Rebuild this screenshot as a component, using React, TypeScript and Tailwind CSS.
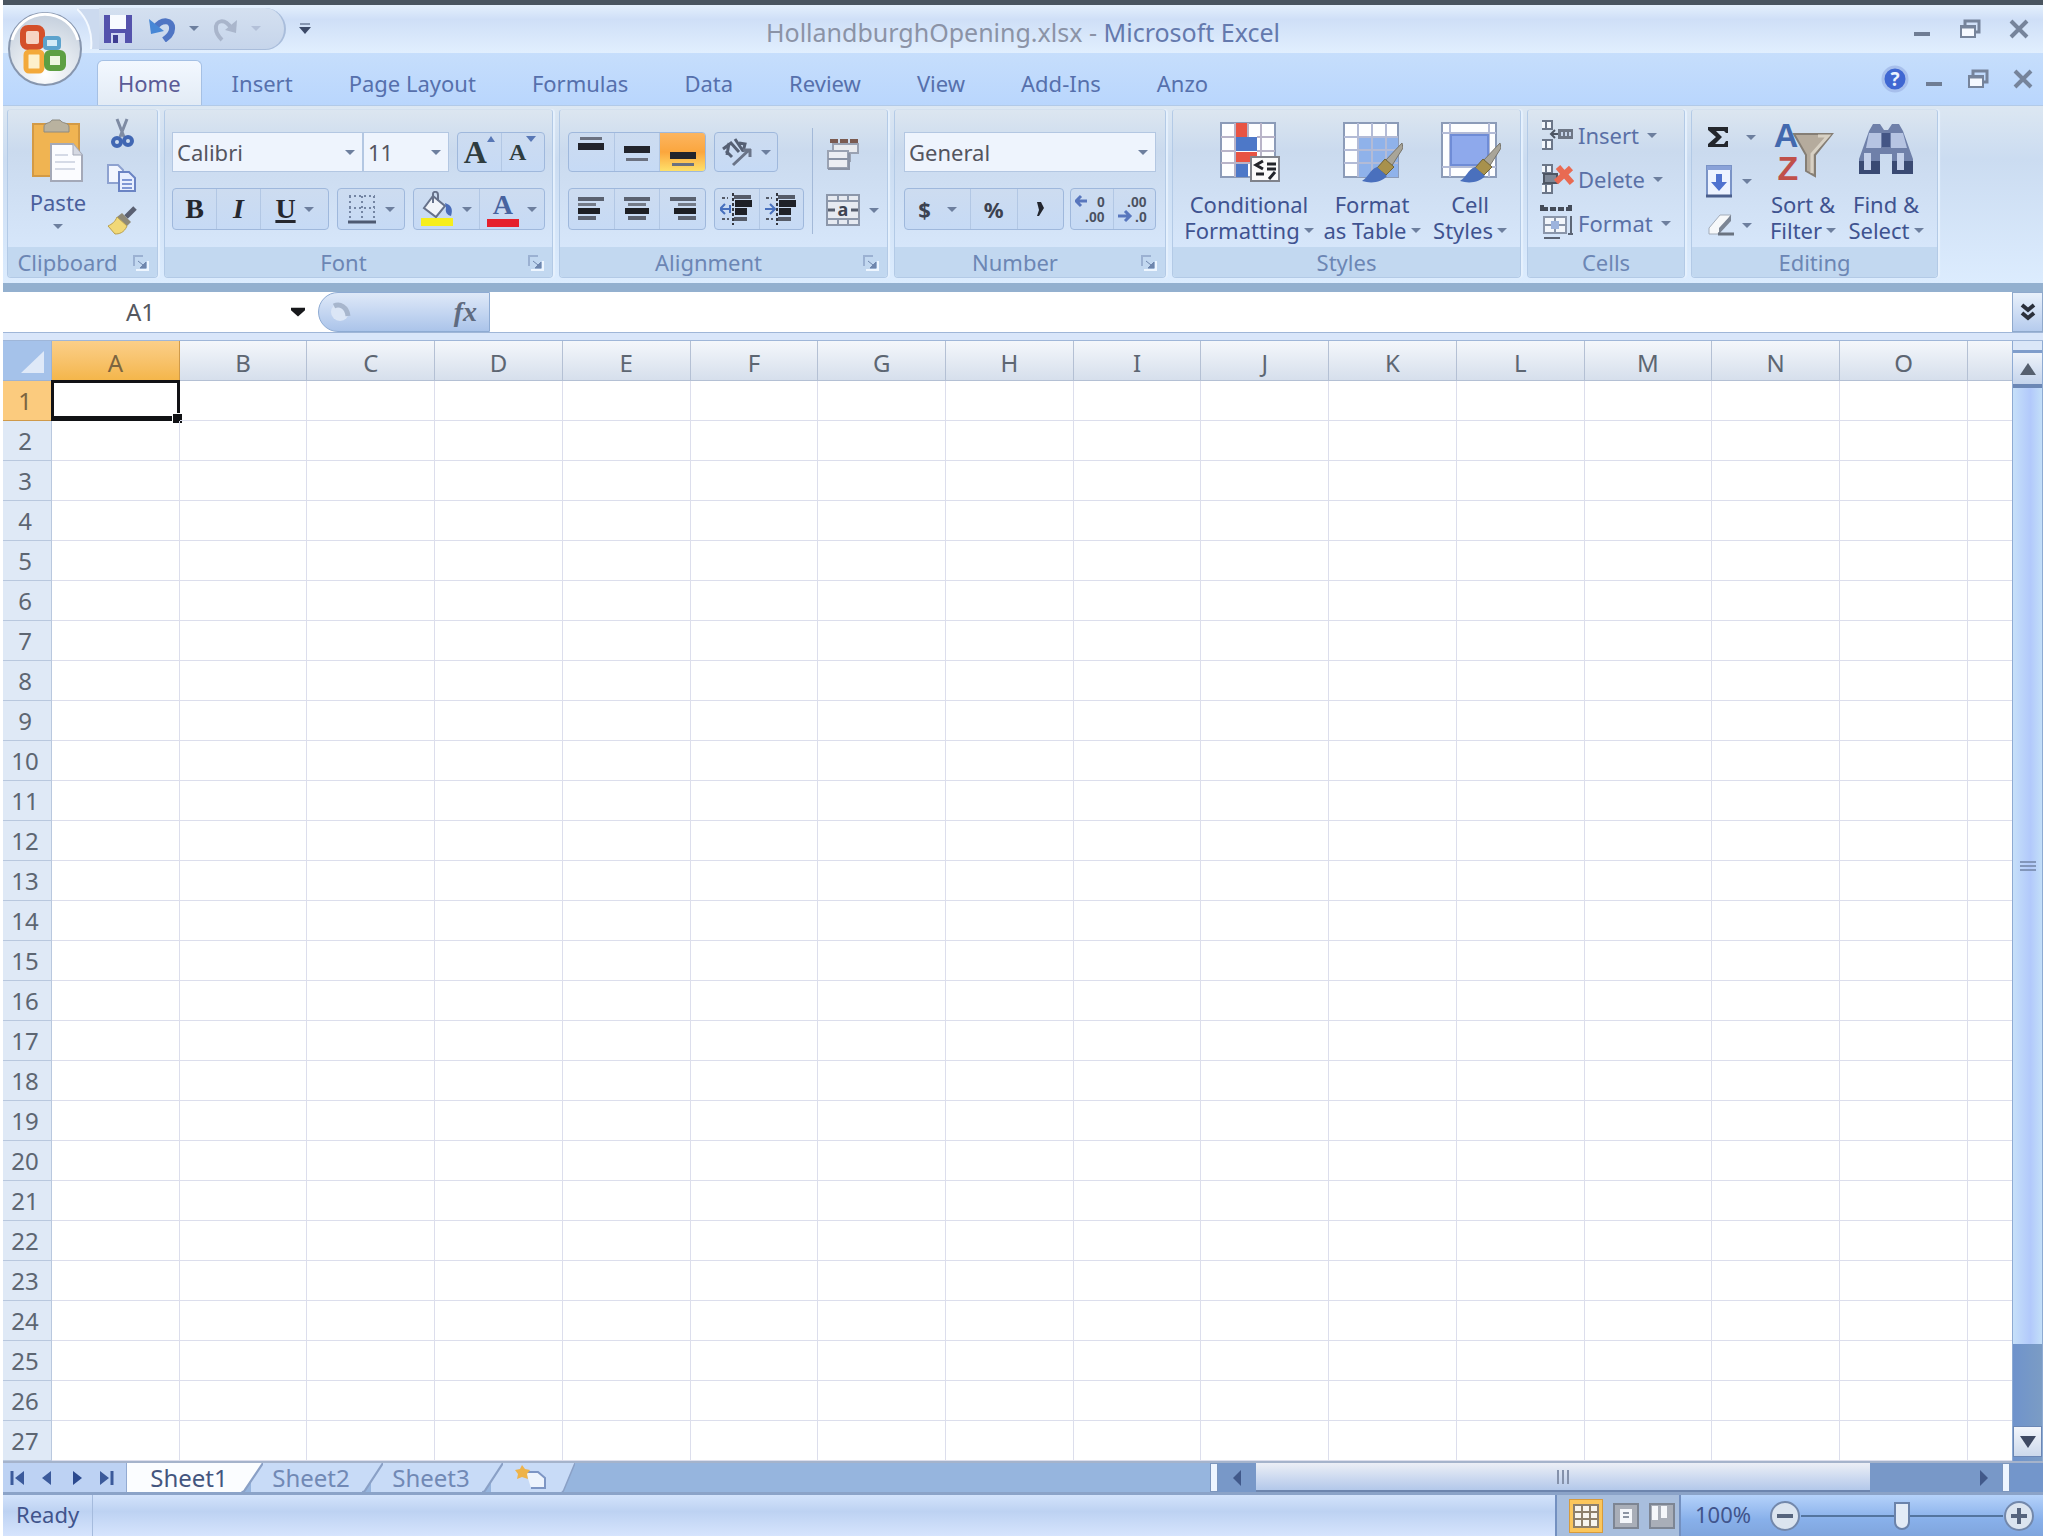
import React from 'react';

const columns = ['A', 'B', 'C', 'D', 'E', 'F', 'G', 'H', 'I', 'J', 'K', 'L', 'M', 'N', 'O'];
const rows = Array.from({ length: 27 }, (_, i) => i + 1);
const tabs = ['Insert', 'Page Layout', 'Formulas', 'Data', 'Review', 'View', 'Add-Ins', 'Anzo'];

interface ArrowProps {
    className?: string;
}

const Arrow: React.FC<ArrowProps> = ({ className = 'text-[#6d7f9e]' }) => (
    <svg viewBox="0 0 12 6" className={`w-[10px] h-[5px] shrink-0 ${className}`} aria-hidden="true">
        <path d="M0 0h12L6 6z" fill="currentColor" />
    </svg>
);

interface GroupProps {
    title: string;
    className: string;
    launcher?: boolean;
    children: React.ReactNode;
}

const Group: React.FC<GroupProps> = ({ title, className, launcher, children }) => (
    <section className={`flex flex-col shrink-0 rounded border border-[#b3cae6] border-t-[#d3e0ee] shadow-[2px_0_1px_#e6f1fd] overflow-hidden ${className}`}>
        <div className="h-[137px] bg-linear-to-b from-[#dce6f0] via-[#cadaee] via-30% to-[#d6e6fa]">{children}</div>
        <div className="h-[30px] flex items-center bg-[#c2d8f0] text-[#6c86b4] px-1">
            <h2 className={`flex-1 text-center leading-7 ${launcher ? 'pr-2' : ''}`}>{title}</h2>
            {launcher && (
                <button type="button" aria-label={`${title} options`} className="mr-1">
                    <svg viewBox="0 0 18 18" className="w-[18px] h-[18px]">
                        <path d="M3 13V3h9" fill="none" stroke="#9bb1d2" strokeWidth="2" />
                        <path d="M7 8l5 4M15 9v6H9z" fill="#6f86ad" stroke="#6f86ad" />
                        <path d="M5 17h12V8" fill="none" stroke="#eef6ff" strokeWidth="2" />
                    </svg>
                </button>
            )}
        </div>
    </section>
);

interface BoxProps {
    className?: string;
    children: React.ReactNode;
}

const ButtonBox: React.FC<BoxProps> = ({ className = 'h-[42px]', children }) => (
    <div className={`flex items-stretch rounded border border-[#9fb8dc] bg-linear-to-b from-[#cddcf0] to-[#c6daf5] divide-x divide-[#b2c7e4] overflow-hidden ${className}`}>
        {children}
    </div>
);

interface ToolProps {
    label: string;
    className?: string;
    children: React.ReactNode;
}

const Tool: React.FC<ToolProps> = ({ label, className = 'flex-1', children }) => (
    <button type="button" aria-label={label} className={`flex items-center justify-center gap-2 ${className}`}>
        {children}
    </button>
);

interface ComboProps {
    label: string;
    value: string;
    className: string;
}

const Combo: React.FC<ComboProps> = ({ label, value, className }) => (
    <div className={`relative h-10 ${className}`}>
        <select aria-label={label} className="appearance-none w-full h-full bg-[#eef4fd] border border-[#b3c7e2] pl-1 text-[#54555f]">
            <option>{value}</option>
        </select>
        <span className="absolute right-2 top-4 flex h-2 items-center pointer-events-none"><Arrow /></span>
    </div>
);

// Four stacked lines, each given as [x, width]
const lineRows = [
    { y: 2, height: 4, fill: '#5b6270' },
    { y: 8, height: 3, fill: '#747b88' },
    { y: 13, height: 6, fill: '#1d1f24' },
    { y: 21, height: 4, fill: '#5b6270' },
];

const Lines: React.FC<{ spans: number[][] }> = ({ spans }) => (
    <svg viewBox="0 0 28 28" className="w-7 h-7">
        {spans.map(([x, w], i) => (
            <rect key={i} x={x} width={w} {...lineRows[i]} />
        ))}
    </svg>
);

const VAlign: React.FC<{ bar: number; thin: number }> = ({ bar, thin }) => (
    <svg viewBox="0 0 28 40" className="w-7 h-10">
        <rect x="1" y={bar} width="26" height="7" fill="#22242c" />
        <rect x="3" y={thin} width="22" height="3" fill="#6b7180" />
    </svg>
);

const Indent: React.FC<{ left?: boolean }> = ({ left }) => (
    <svg viewBox="0 0 34 32" className="w-[34px] h-8">
        <path d="M14 4h17M14 26h13" stroke="#555b68" strokeWidth="4" />
        <path d="M15 7h17v7H15zM15 15h12v7H15z" fill="#1f2127" />
        <path d="M13 0v32" stroke="#33363f" strokeWidth="2" strokeDasharray="3 2" />
        {left ? (
            <path d="M10 12v8M1 16h9M5 11l-5 5 5 5" fill="none" stroke="#4870bd" strokeWidth="2" />
        ) : (
            <path d="M1 16h9M6 11l5 5-5 5" fill="none" stroke="#4870bd" strokeWidth="2" />
        )}
        <path d="M2 26h7M2 5h6" stroke="#555b68" strokeWidth="2" strokeDasharray="3 2" />
    </svg>
);

const Sheet = ({ children }: { children?: React.ReactNode }) => (
    <svg viewBox="0 0 62 64" className="w-[62px] h-16">
        <path d="M3 4h54v54H3z" fill="#fdfeff" stroke="#8b9bb8" strokeWidth="2" />
        {children}
    </svg>
);

const Brush = () => (
    <g>
        <path d="M61 24L44 42l6 6 12-19z" fill="#a9a598" stroke="#77746a" />
        <path d="M44 40l-8 9 9 7 8-8z" fill="#a8914c" stroke="#6f6336" />
        <path d="M36 48c-8 3-8 10-15 14 10 3 20 1 25-5z" fill="#4a70bd" />
    </g>
);

interface BigProps {
    lines: string[];
    className: string;
    icon: React.ReactNode;
}

const BigButton: React.FC<BigProps> = ({ lines, className, icon }) => (
    <button type="button" className={`flex flex-col items-center text-[#3f5390] leading-[26px] whitespace-nowrap ${className}`}>
        {icon}
        <span className="mt-2">{lines[0]}</span>
        <span className="flex items-center gap-1">{lines[1]}<Arrow /></span>
    </button>
);

const RestoreIcon = () => (
    <svg viewBox="0 0 22 20" className="w-[22px] h-5">
        <path d="M6 6V2h14v11h-4" fill="none" stroke="#76849b" strokeWidth="3" />
        <path d="M2 7h14v11H2z" fill="#f5f9ff" stroke="#76849b" strokeWidth="2" />
        <path d="M2 8h14" stroke="#76849b" strokeWidth="3" />
    </svg>
);

const CloseIcon = () => (
    <svg viewBox="0 0 20 20" className="w-5 h-5">
        <path d="M2 2l16 16M18 2L2 18" stroke="#76849b" strokeWidth="4" />
    </svg>
);

const MinimizeIcon = () => (
    <svg viewBox="0 0 18 20" className="w-[18px] h-5">
        <path d="M1 15h16" stroke="#6f7d94" strokeWidth="4" />
    </svg>
);

const OfficeButton = () => (
    <button type="button" aria-label="Office Button" className="absolute left-[4px] top-[5px] z-10">
        <svg viewBox="0 0 76 78" className="w-[76px] h-[78px]">
            <defs>
                <radialGradient id="orb" cx="50%" cy="85%" r="85%">
                    <stop offset="0" stopColor="#ffffff" />
                    <stop offset="0.55" stopColor="#dfe5ec" />
                    <stop offset="1" stopColor="#c3cedc" />
                </radialGradient>
            </defs>
            <circle cx="38" cy="39" r="36" fill="url(#orb)" stroke="#8796ae" strokeWidth="2" />
            <path d="M5 30a34 34 0 0 1 66 0" fill="none" stroke="#fff" strokeWidth="3" />
            <rect x="16" y="18" width="19" height="19" rx="5" fill="#f6d5c4" stroke="#d4502a" strokeWidth="6" />
            <rect x="38" y="28" width="14" height="10" rx="2" fill="#d5ebf7" stroke="#5da3cd" strokeWidth="4" />
            <rect x="19" y="42" width="16" height="19" rx="3" fill="#fdf0cc" stroke="#f3a93b" strokeWidth="5" />
            <rect x="40" y="43" width="16" height="15" rx="3" fill="#eef6e0" stroke="#5d9f42" strokeWidth="6" />
        </svg>
    </button>
);

const TitleBar = () => (
    <header className="relative flex items-center h-12 bg-linear-to-b from-[#e4f0fd] via-[#cfdff7] via-30% to-[#e1effe]">
        <OfficeButton />
        <svg viewBox="0 0 22 42" className="ml-[74px] w-[22px] h-[42px]" aria-hidden="true">
            <path d="M0 1h22v40H14C16 25 10 10 0 1z" fill="#ccdaef" />
            <path d="M0 1c10 9 16 24 14 40" fill="none" stroke="#f4f9ff" strokeWidth="2" />
        </svg>
        <div className="flex items-center w-[187px] h-[42px] rounded-r-full border-r-2 border-b border-[#a9bddb] bg-linear-to-b from-[#d4e0f0] to-[#c6d5eb]">
            <button type="button" aria-label="Save" className="ml-[4px]">
                <svg viewBox="0 0 30 30" className="w-[30px] h-[30px]">
                    <path d="M1 1h28v28H1z" fill="#5452ac" />
                    <path d="M7 1h16v14H7z" fill="#f7faff" />
                    <path d="M8 19h14v10H8z" fill="#cfd6f2" />
                    <path d="M10 21h5v8h-5z" fill="#3e3d92" />
                </svg>
            </button>
            <button type="button" aria-label="Undo" className="flex items-center gap-3 ml-4">
                <svg viewBox="0 0 28 26" className="w-7 h-[26px]">
                    <path d="M6 12C13 2 24 4 23 13c0 5-4 8-8 11" fill="none" stroke="#4f75c4" strokeWidth="6" />
                    <path d="M0 3l2 15 13-3z" fill="#4787d6" />
                </svg>
                <Arrow />
            </button>
            <button type="button" aria-label="Redo" className="flex items-center gap-3 ml-3">
                <svg viewBox="0 0 28 26" className="w-7 h-[26px]">
                    <path d="M20 12C14 2 4 4 5 13c0 5 3 8 6 11" fill="none" stroke="#a9b5cb" strokeWidth="4" />
                    <path d="M26 4l-1 13-11-3z" fill="#aab6cc" />
                </svg>
                <Arrow className="text-[#b3c0d8]" />
            </button>
        </div>
        <button type="button" aria-label="Customize Quick Access Toolbar" className="ml-3">
            <svg viewBox="0 0 14 14" className="w-[14px] h-[14px]">
                <path d="M2 2h10" stroke="#8797b2" strokeWidth="2" />
                <path d="M1 5h12l-6 7z" fill="#3c4a68" />
            </svg>
        </button>
        <h1 className="absolute inset-x-0 text-center text-[25px] text-[#8b93a6] pt-2 pointer-events-none">
            HollandburghOpening.xlsx - <span className="text-[#6479ad]">Microsoft Excel</span>
        </h1>
        <div className="ml-auto flex items-center gap-7 pr-[14px]">
            <button type="button" aria-label="Minimize"><MinimizeIcon /></button>
            <button type="button" aria-label="Restore"><RestoreIcon /></button>
            <button type="button" aria-label="Close"><CloseIcon /></button>
        </div>
    </header>
);

const TabBar = () => (
    <nav className="flex items-end h-[53px] bg-linear-to-b from-[#c6defc] to-[#b9d6fd] text-[#5670ac] border-b border-[#b2cae8]">
        <button type="button" className="ml-[94px] mr-[2px] px-5 h-[45px] rounded-t-md border border-b-0 border-[#a5c0e4] bg-linear-to-b from-[#f3f8ff] to-[#e2ebf5] text-[#5a5b96]">Home</button>
        {tabs.map((tab) => (
            <button type="button" key={tab} className="px-7 h-[44px]">{tab}</button>
        ))}
        <div className="ml-auto flex items-center gap-4 pr-[10px] h-[52px]">
            <button type="button" aria-label="Help">
                <svg viewBox="0 0 28 28" className="w-7 h-7">
                    <circle cx="14" cy="14" r="12" fill="#3f67d2" stroke="#a7bfec" strokeWidth="3" />
                    <text x="14" y="21" textAnchor="middle" fontSize="19" fontWeight="bold" fill="#eaf2ff">?</text>
                </svg>
            </button>
            <div className="flex items-center gap-6">
                <button type="button" aria-label="Minimize workbook"><MinimizeIcon /></button>
                <button type="button" aria-label="Restore workbook"><RestoreIcon /></button>
                <button type="button" aria-label="Close workbook"><CloseIcon /></button>
            </div>
        </div>
    </nav>
);

const ClipboardGroup = () => (
    <Group title="Clipboard" launcher className="w-[151px]">
        <div className="flex pt-2">
            <button type="button" className="flex flex-col items-center ml-[18px] w-16 text-[#4a5f9c]">
                <svg viewBox="0 0 56 66" className="w-14 h-[66px]">
                    <path d="M3 6h46v52H3z" fill="#f0b452" stroke="#d39a45" strokeWidth="2" />
                    <path d="M14 9c0-5 6-3 8-7h8c2 4 9 2 9 7v5H14z" fill="#b9b29f" stroke="#8d8a80" />
                    <path d="M21 26h22l9 11v26H21z" fill="#fbfcff" stroke="#a4a9b8" strokeWidth="2" />
                    <path d="M43 26v11h9" fill="#d6d9e2" stroke="#a4a9b8" />
                    <path d="M25 37h13M25 44h20M25 51h20" stroke="#d5dae6" strokeWidth="2" />
                </svg>
                <span className="mt-1 mb-2 leading-7">Paste</span>
                <Arrow />
            </button>
            <div className="flex flex-col items-center gap-[14px] ml-4 w-8">
                <button type="button" aria-label="Cut">
                    <svg viewBox="0 0 24 32" className="w-6 h-8">
                        <path d="M7 1l7 18M17 1l-7 18" stroke="#7e8ba3" strokeWidth="3" />
                        <circle cx="7" cy="24" r="4" fill="none" stroke="#4167b3" strokeWidth="4" />
                        <circle cx="18" cy="23" r="4" fill="none" stroke="#4167b3" strokeWidth="4" />
                    </svg>
                </button>
                <button type="button" aria-label="Copy">
                    <svg viewBox="0 0 32 28" className="w-8 h-7">
                        <path d="M2 1h10l5 5v13H2z" fill="#f2f6ff" stroke="#8ea2d0" strokeWidth="2" />
                        <path d="M13 8h10l6 6v13H13z" fill="#e8efff" stroke="#6b84c4" strokeWidth="2" />
                        <path d="M16 16h10M16 20h10M16 24h10" stroke="#7f97d4" strokeWidth="2" />
                    </svg>
                </button>
                <button type="button" aria-label="Format Painter">
                    <svg viewBox="0 0 32 30" className="w-8 h-[30px]">
                        <path d="M29 2l-9 9" stroke="#5a6072" strokeWidth="5" />
                        <path d="M16 7l9 9-4 4-10-9z" fill="#8f8a78" />
                        <path d="M11 11l10 9c-3 7-8 8-12 8l-7-8c4-2 7-4 9-9z" fill="#f1d877" stroke="#b9a04d" />
                    </svg>
                </button>
            </div>
        </div>
    </Group>
);

const FontGroup = () => (
    <Group title="Font" launcher className="w-[389px]">
        <div className="flex flex-col gap-4 pt-[22px] px-[7px]">
            <div className="flex">
                <Combo label="Font" value="Calibri" className="w-[191px]" />
                <Combo label="Font size" value="11" className="w-[86px]" />
                <ButtonBox className="h-10 flex-1 ml-2 font-['Liberation_Serif',serif] font-bold text-[#2f3d3f] leading-none">
                    <Tool label="Grow Font">
                        <span className="flex items-start text-[32px]">
                            A
                            <svg viewBox="0 0 8 6" className="w-2 h-[6px]"><path d="M0 6h8L4 0z" fill="#5877b5" /></svg>
                        </span>
                    </Tool>
                    <Tool label="Shrink Font">
                        <span className="flex items-start text-2xl">
                            A
                            <svg viewBox="0 0 10 6" className="w-[10px] h-[6px]"><path d="M0 0h10L5 6z" fill="#5877b5" /></svg>
                        </span>
                    </Tool>
                </ButtonBox>
            </div>
            <div className="flex gap-2 font-['Liberation_Serif',serif] font-bold text-[28px] leading-none text-[#25272e]">
                <ButtonBox className="h-[42px] w-[157px]">
                    <Tool label="Bold">B</Tool>
                    <Tool label="Italic" className="flex-1 italic">I</Tool>
                    <Tool label="Underline" className="w-[67px]"><span className="underline decoration-3">U</span><Arrow /></Tool>
                </ButtonBox>
                <ButtonBox className="h-[42px] w-[68px]">
                    <Tool label="Borders">
                        <svg viewBox="0 0 30 32" className="w-[30px] h-8">
                            <path d="M2 3h26M2 15h26M3 3v24M15 3v24M27 3v24" stroke="#7485a3" strokeWidth="2" strokeDasharray="2 3" fill="none" />
                            <path d="M1 29h28" stroke="#4e5a72" strokeWidth="3" />
                        </svg>
                        <Arrow />
                    </Tool>
                </ButtonBox>
                <ButtonBox className="h-[42px] flex-1">
                    <Tool label="Fill Color">
                        <svg viewBox="0 0 34 36" className="w-[34px] h-9">
                            <path d="M13 5l12 10-9 11-12-9z" fill="#f1f4f9" stroke="#66718a" strokeWidth="2" />
                            <path d="M13 12V3c0-3 5-3 5 1v6" fill="none" stroke="#66718a" strokeWidth="2" />
                            <path d="M25 12c7 2 8 7 6 13-4-1-6-4-5-8z" fill="#4a6cb9" />
                            <path d="M1 27h32v8H1z" fill="#f6ee1c" />
                        </svg>
                        <Arrow />
                    </Tool>
                    <Tool label="Font Color">
                        <span className="flex flex-col items-center text-[#47639f]">
                            <span className="leading-7">A</span>
                            <span className="w-8 h-2 bg-[#e5202c]" />
                        </span>
                        <Arrow />
                    </Tool>
                </ButtonBox>
            </div>
        </div>
    </Group>
);

const AlignmentGroup = () => (
    <Group title="Alignment" launcher className="w-[329px]">
        <div className="flex pt-[22px] pl-2">
            <div className="flex flex-col gap-4">
                <div className="flex gap-2">
                    <ButtonBox className="h-10 w-[138px]">
                        <Tool label="Top Align"><VAlign bar={11} thin={5} /></Tool>
                        <Tool label="Middle Align"><VAlign bar={14} thin={26} /></Tool>
                        <Tool label="Bottom Align" className="flex-1 bg-linear-to-b from-[#fcb55f] via-[#fba63d] to-[#fde06a]"><VAlign bar={20} thin={31} /></Tool>
                    </ButtonBox>
                    <ButtonBox className="h-10 w-16">
                        <Tool label="Orientation">
                            <svg viewBox="0 0 32 30" className="w-8 h-[30px]">
                                <path d="M2 12l8-6 8 9M5 14l6 6M8 6l-2 12M14 2l8 12M18 6l6 1-2 8" fill="none" stroke="#566074" strokeWidth="3" />
                                <path d="M12 28L28 13M30 13h-8M29 12v8" stroke="#6a7488" strokeWidth="3" fill="none" />
                            </svg>
                            <Arrow />
                        </Tool>
                    </ButtonBox>
                </div>
                <div className="flex gap-2">
                    <ButtonBox className="h-[42px] w-[138px]">
                        <Tool label="Align Left"><Lines spans={[[1, 26], [1, 18], [1, 22], [1, 18]]} /></Tool>
                        <Tool label="Center"><Lines spans={[[1, 26], [5, 18], [2, 24], [5, 18]]} /></Tool>
                        <Tool label="Align Right"><Lines spans={[[1, 26], [9, 18], [5, 22], [9, 18]]} /></Tool>
                    </ButtonBox>
                    <ButtonBox className="h-[42px] w-[90px]">
                        <Tool label="Decrease Indent"><Indent left /></Tool>
                        <Tool label="Increase Indent"><Indent /></Tool>
                    </ButtonBox>
                </div>
            </div>
            <div className="w-px h-[106px] -mt-1 ml-2 bg-[#a3b9d8]" />
            <div className="flex flex-col gap-5 pl-3 pt-1">
                <button type="button" aria-label="Wrap Text">
                    <svg viewBox="0 0 36 36" className="w-9 h-9">
                        <path d="M5 5h28" stroke="#7a5a50" strokeWidth="4" strokeDasharray="8 2" />
                        <path d="M8 8h25v9h-8v8H8z" fill="#e9ebef" stroke="#9aa2b2" strokeWidth="2" />
                        <path d="M3 15h20v17H3z" fill="#eceef3" stroke="#9aa2b2" strokeWidth="2" />
                        <path d="M3 23h20M3 33h21V17" fill="none" stroke="#8a93a5" strokeWidth="2" />
                    </svg>
                </button>
                <button type="button" aria-label="Merge and Center" className="flex items-center gap-2">
                    <svg viewBox="0 0 36 36" className="w-9 h-9">
                        <path d="M2 3h32v30H2zM2 9h32M2 27h32M13 3v6M23 3v6M13 27v6M23 27v6" fill="#e6eaf1" stroke="#8c97aa" strokeWidth="2" />
                        <path d="M3 18h7M33 18h-7" stroke="#565e6e" strokeWidth="3" />
                        <text x="18" y="24" textAnchor="middle" fontSize="18" fontWeight="bold" fill="#3d4452">a</text>
                    </svg>
                    <Arrow />
                </button>
            </div>
        </div>
    </Group>
);

const NumberGroup = () => (
    <Group title="Number" launcher className="w-[272px]">
        <div className="flex flex-col gap-4 pt-[22px] px-[9px]">
            <Combo label="Number format" value="General" className="w-full" />
            <div className="flex gap-[6px]">
                <ButtonBox className="h-[42px] w-[160px] text-[#3c4250] font-bold">
                    <Tool label="Accounting Number Format" className="w-[66px]">
                        <span className="mr-2">$</span><Arrow />
                    </Tool>
                    <Tool label="Percent Style">%</Tool>
                    <Tool label="Comma Style">
                        <svg viewBox="0 0 10 16" className="w-[10px] h-4"><path d="M2 1h4l3 6-5 8H2l2-6z" fill="#23262e" /></svg>
                    </Tool>
                </ButtonBox>
                <ButtonBox className="h-[42px] flex-1 font-['Liberation_Sans',sans-serif]">
                    <Tool label="Increase Decimal">
                        <svg viewBox="0 0 34 34" className="w-[34px] h-[34px]">
                            <path d="M1 9h11M6 4L1 9l5 5" fill="none" stroke="#5876bd" strokeWidth="3" />
                            <text x="22" y="15" fontSize="14" fontWeight="bold" fill="#4a5160">0</text>
                            <text x="10" y="30" fontSize="14" fontWeight="bold" fill="#4a5160">.00</text>
                        </svg>
                    </Tool>
                    <Tool label="Decrease Decimal">
                        <svg viewBox="0 0 34 34" className="w-[34px] h-[34px]">
                            <text x="10" y="15" fontSize="14" fontWeight="bold" fill="#4a5160">.00</text>
                            <path d="M1 24h12M8 19l5 5-5 5" fill="none" stroke="#5876bd" strokeWidth="3" />
                            <text x="18" y="30" fontSize="14" fontWeight="bold" fill="#4a5160">.0</text>
                        </svg>
                    </Tool>
                </ButtonBox>
            </div>
        </div>
    </Group>
);

const StylesGroup = () => (
    <Group title="Styles" className="w-[349px]">
        <div className="flex pt-[9px] pl-2">
            <BigButton
                lines={['Conditional', 'Formatting']}
                className="w-[136px]"
                icon={
                    <Sheet>
                        <path d="M17 4h13v14H17zM17 33h22v10H17z" fill="#e85443" />
                        <path d="M17 18h22v14H17zM17 44h13v14H17z" fill="#4d78c8" />
                        <path d="M3 18h14M39 18h18M3 32h14M39 32h18M3 44h54M17 4v54M30 4v14M43 4v54" stroke="#b8b4c8" strokeWidth="2" />
                        <path d="M33 38h28v24H33z" fill="#fbfbfb" stroke="#80838b" strokeWidth="2" />
                        <path d="M45 42l-7 4 7 4M38 55h8M49 45h9M49 50h9M57 53l-6 7" stroke="#24262b" strokeWidth="3" fill="none" />
                    </Sheet>
                }
            />
            <BigButton
                lines={['Format', 'as Table']}
                className="w-[110px]"
                icon={
                    <Sheet>
                        <path d="M17 18h40v40H17z" fill="#8fb2ea" />
                        <path d="M3 18h54M3 31h54M3 44h54M17 4v54M31 4v54M45 4v54" stroke="#b3bbd6" strokeWidth="2" />
                        <Brush />
                    </Sheet>
                }
            />
            <BigButton
                lines={['Cell', 'Styles']}
                className="w-[86px]"
                icon={
                    <Sheet>
                        <path d="M3 14h54M3 48h54M11 4v54M50 4v54" stroke="#b3bbd6" strokeWidth="2" />
                        <path d="M12 16h37v30H12z" fill="#8ea9ec" stroke="#6f8cd6" strokeWidth="2" />
                        <Brush />
                    </Sheet>
                }
            />
        </div>
    </Group>
);

const cellBlocks = <path d="M2 3h10v8H2M2 22h10v9H2M6 3v8M6 22v9" fill="#f2f6fb" stroke="#6b7688" strokeWidth="2" />;

const CellsGroup = () => (
    <Group title="Cells" className="w-[158px]">
        <div className="flex flex-col pt-[3px] pl-3 text-[#5a70a6]">
            <button type="button" className="flex items-center gap-1 h-11">
                <svg viewBox="0 0 34 34" className="w-[34px] h-[34px]">
                    {cellBlocks}
                    <path d="M18 11h15v10H18z" fill="#6d7685" />
                    <path d="M22 14v4M26 14v4M30 14v4" stroke="#c6d4ea" strokeWidth="2" />
                    <path d="M18 16h-6M15 12l-4 4 4 4" fill="none" stroke="#4d5563" strokeWidth="2" />
                </svg>
                <span className="mr-1">Insert</span><Arrow />
            </button>
            <button type="button" className="flex items-center gap-1 h-11">
                <svg viewBox="0 0 34 34" className="w-[34px] h-[34px]">
                    {cellBlocks}
                    <path d="M4 12h13v9H4z" fill="#7d8796" stroke="#4d5563" strokeWidth="2" />
                    <path d="M18 5l14 16M31 6L16 20" stroke="#e96a52" strokeWidth="6" />
                </svg>
                <span className="mr-1">Delete</span><Arrow />
            </button>
            <button type="button" className="flex items-center gap-1 h-11">
                <svg viewBox="0 0 34 38" className="w-[34px] h-[38px]">
                    <path d="M2 5h28M2 1v8M30 1v8" stroke="#444b58" strokeWidth="4" strokeDasharray="6 2" />
                    <path d="M4 13h22v16H4zM4 21h22M15 13v16" fill="#f2f6fb" stroke="#8a96aa" strokeWidth="2" />
                    <path d="M31 12v18M28 30h5M4 34h16" stroke="#5d6676" strokeWidth="2" />
                    <path d="M11 17h8v8h-8z" fill="#9db4dd" />
                </svg>
                <span className="mr-1">Format</span><Arrow />
            </button>
        </div>
    </Group>
);

const EditingGroup = () => (
    <Group title="Editing" className="w-[247px]">
        <div className="flex pt-[9px] pl-[14px]">
            <div className="flex flex-col gap-2 w-[60px]">
                <button type="button" aria-label="Sum" className="flex items-center gap-4 h-9">
                    <svg viewBox="0 0 24 24" className="w-6 h-6">
                        <path d="M2 2h20v6h-2l-2-2h-8l6 6-7 7h9l2-3h2v6H2v-3l8-7-8-7z" fill="#24272d" />
                    </svg>
                    <Arrow />
                </button>
                <button type="button" aria-label="Fill" className="flex items-center gap-[10px] h-9">
                    <svg viewBox="0 0 26 34" className="w-[26px] h-[34px]">
                        <path d="M1 2h24v30H1z" fill="#edf3ff" stroke="#7a93c6" strokeWidth="2" />
                        <path d="M1 4h24" stroke="#8aa2d8" strokeWidth="4" />
                        <path d="M10 10h6v8h5l-8 9-8-9h5z" fill="#4f72cf" />
                        <path d="M0 32h26" stroke="#4b5f8c" strokeWidth="3" />
                    </svg>
                    <Arrow />
                </button>
                <button type="button" aria-label="Clear" className="flex items-center gap-[6px] h-9">
                    <svg viewBox="0 0 30 26" className="w-[30px] h-[26px]">
                        <path d="M3 16L14 3h11L15 17l-3 5H3z" fill="#f6f8fa" stroke="#a3acb9" />
                        <path d="M25 3v6L13 22v-6z" fill="#7b8594" />
                        <path d="M12 22h16" stroke="#6a7380" strokeWidth="3" />
                    </svg>
                    <Arrow />
                </button>
            </div>
            <BigButton
                lines={['Sort &', 'Filter']}
                className="w-[74px]"
                icon={
                    <svg viewBox="0 0 62 64" className="w-[62px] h-16 font-['Liberation_Sans',sans-serif]">
                        <path d="M22 15h38L43 36v21l-9-5V36z" fill="#b5ab9d" stroke="#857e75" strokeWidth="2" />
                        <path d="M46 17h10L40 35v19" fill="none" stroke="#d8d1c4" strokeWidth="3" />
                        <text x="14" y="28" textAnchor="middle" fontSize="34" fontWeight="bold" fill="#4369ae">A</text>
                        <text x="16" y="61" textAnchor="middle" fontSize="34" fontWeight="bold" fill="#c0504a">Z</text>
                    </svg>
                }
            />
            <BigButton
                lines={['Find &', 'Select']}
                className="w-[92px]"
                icon={
                    <svg viewBox="0 0 62 64" className="w-[62px] h-16">
                        <path d="M14 12l4-7h7l4 6h4l4-6h7l4 7 10 28v14H37V35H25v19H4V40z" fill="#6f80a9" />
                        <path d="M14 14h12v15H11zM36 14h12l4 15H36z" fill="#b6c4e2" />
                        <path d="M4 42h21v13H4zM37 42h21v13H37z" fill="#3a4a73" />
                        <path d="M9 34h7v17H9zM42 34h7v17h-7z" fill="#c3d0ea" />
                        <path d="M27 14h8v14h-8z" fill="#435585" />
                    </svg>
                }
            />
        </div>
    </Group>
);

const Ribbon = () => (
    <div className="flex gap-[6px] px-1 pt-[3px] pb-[5px] bg-linear-to-b from-[#dce7f2] via-[#cbdcf1] via-30% to-[#dcecfe] border-b-9 border-[#93b0cf]">
        <ClipboardGroup />
        <FontGroup />
        <AlignmentGroup />
        <NumberGroup />
        <StylesGroup />
        <CellsGroup />
        <EditingGroup />
    </div>
);

const FormulaBar = () => (
    <div className="flex h-10 bg-white">
        <input aria-label="Name Box" defaultValue="A1" className="w-[275px] text-center text-2xl text-[#55585f] outline-none" />
        <button type="button" aria-label="Name list" className="w-10 flex items-center justify-center">
            <svg viewBox="0 0 16 10" className="w-[14px] h-[10px]"><path d="M0 0h16v3L8 10 0 3z" fill="#17181b" /></svg>
        </button>
        <div className="flex items-center justify-between w-[172px] rounded-l-full border border-[#8eabd3] bg-linear-to-b from-[#dfe9f8] to-[#abc4ea] pl-[10px] pr-3">
            <svg viewBox="0 0 22 22" className="w-[22px] h-[22px]">
                <circle cx="11" cy="11" r="9" fill="#dbe6f6" />
                <path d="M5 5c6-3 13 1 14 10" fill="none" stroke="#a7b6cd" strokeWidth="5" />
            </svg>
            <button type="button" aria-label="Insert Function" className="font-['Liberation_Serif',serif] italic font-bold text-[28px] leading-none text-[#5f6b80]">fx</button>
        </div>
        <input aria-label="Formula" className="flex-1 min-w-0 px-2 outline-none" />
        <button type="button" aria-label="Expand Formula Bar" className="w-[31px] flex items-center justify-center border border-[#8fa9cc] bg-linear-to-b from-[#e9f1fb] to-[#b5cbed]">
            <svg viewBox="0 0 16 18" className="w-4 h-[18px]">
                <path d="M2 2l6 5 6-5M2 10l6 5 6-5" fill="none" stroke="#2b303b" strokeWidth="4" />
            </svg>
        </button>
    </div>
);

const Grid = () => (
    <table className="table-fixed border-separate border-spacing-0 bg-white w-full text-2xl leading-none text-[#5d6672]">
        <colgroup>
            <col className="w-[49px]" />
            {columns.map((c) => <col key={c} />)}
            <col className="w-11" />
        </colgroup>
        <thead>
            <tr className="h-10">
                <th className="p-0 bg-[#a5c2ea] border-r border-b border-[#9db3d3]" aria-label="Select all">
                    <svg viewBox="0 0 48 39" className="w-12 h-[39px] block"><path d="M41 10v22H18z" fill="#dfe9f8" /></svg>
                </th>
                {columns.map((c, i) => (
                    <th key={c} className={i === 0
                        ? 'p-0 pt-1 font-normal bg-linear-to-b from-[#fbcf88] to-[#f4b64a] border-r border-b border-[#cf9a4a] text-[#7c6540]'
                        : 'p-0 pt-1 font-normal bg-linear-to-b from-[#f4f7fb] to-[#d6dfec] border-r border-b border-[#b4c0d4]'}>
                        {c}
                    </th>
                ))}
                <th className="p-0 bg-linear-to-b from-[#f4f7fb] to-[#d6dfec] border-b border-[#b4c0d4]" />
            </tr>
        </thead>
        <tbody>
            {rows.map((r) => (
                <tr key={r} className="h-10">
                    <th className={r === 1
                        ? 'p-0 pr-1 font-normal bg-[#fbcb7e] border-r border-b border-[#cf9a4a] text-[#7c6540]'
                        : 'p-0 pr-1 font-normal bg-[#dfe9f6] border-r border-b border-[#b9c8de]'}>
                        {r}
                    </th>
                    {columns.map((c) => (
                        <td key={c} className="relative p-0 border-r border-b border-[#dcdeec]">
                            {r === 1 && c === 'A' && (
                                <div className="absolute -inset-px border-3 border-b-5 border-[#111215]">
                                    <span className="absolute -right-[5px] -bottom-[7px] w-[10px] h-[10px] bg-[#111215] border-t border-l border-white" />
                                </div>
                            )}
                        </td>
                    ))}
                    <td className="p-0 border-b border-[#dcdeec]" />
                </tr>
            ))}
        </tbody>
    </table>
);

const VerticalScroll = () => (
    <div className="flex flex-col w-[31px] shrink-0 bg-linear-to-r from-[#6f93cc] to-[#7b9cc4] border-x border-[#8eabd3]">
        <div className="h-[12px] bg-[#dbe7f8] border-b-3 border-[#7f9dcb]" />
        <button type="button" aria-label="Scroll up" className="h-[35px] flex items-center justify-center bg-linear-to-b from-[#eef3fa] to-[#c4d4ec] border-b-4 border-[#6b87b5]">
            <svg viewBox="0 0 16 12" className="w-4 h-3"><path d="M8 0l8 12H0z" fill="#56606f" /></svg>
        </button>
        <div className="h-[956px] flex items-center justify-center bg-linear-to-r from-[#c6e0f9] via-[#b2c9fb] via-60% to-[#c3dff8]">
            <svg viewBox="0 0 16 12" className="w-4 h-3"><path d="M0 2h16M0 6h16M0 10h16" stroke="#8296ba" strokeWidth="2" /></svg>
        </div>
        <button type="button" aria-label="Scroll down" className="mt-auto mb-1 h-[31px] flex items-center justify-center border border-[#6b87b5] bg-linear-to-b from-[#f3f6fb] to-[#ccd9ec]">
            <svg viewBox="0 0 16 12" className="w-4 h-3"><path d="M8 12L0 0h16z" fill="#3f4a63" /></svg>
        </button>
    </div>
);

interface SheetTabProps {
    active?: boolean;
    className: string;
    children: React.ReactNode;
}

const SheetTab: React.FC<SheetTabProps> = ({ active, className, children }) => (
    <button type="button" className={`relative -mr-3 text-2xl ${active ? 'text-[#43557e]' : 'text-[#7189b5]'} ${className}`}>
        <svg viewBox="0 0 120 30" preserveAspectRatio="none" className="absolute inset-0 w-full h-full">
            <path d="M0 0h120L104 28q-1 2-3 2H0z" fill={active ? '#fbfdff' : '#c8dbf7'} />
            <path d="M120 0L104 28q-1 2-3 2" fill="none" stroke="#8aa0c6" strokeWidth="2" />
        </svg>
        <span className="relative flex items-center justify-center leading-7 pr-3">{children}</span>
    </button>
);

const SheetBar = () => (
    <div className="flex h-[31px] bg-[#96b5de] border-t-2 border-[#a5b3cb]">
        <div className="flex items-center justify-between w-[124px] px-[7px] pr-3 bg-[#bdd2f3] border-r border-[#93abd2]">
            <button type="button" aria-label="First sheet">
                <svg viewBox="0 0 16 16" className="w-4 h-4"><path d="M2 1v14" stroke="#3b5a9b" strokeWidth="3" /><path d="M14 1v14L5 8z" fill="#3b5a9b" /></svg>
            </button>
            <button type="button" aria-label="Previous sheet">
                <svg viewBox="0 0 16 16" className="w-4 h-4"><path d="M12 1v14L3 8z" fill="#3b5a9b" /></svg>
            </button>
            <button type="button" aria-label="Next sheet">
                <svg viewBox="0 0 16 16" className="w-4 h-4"><path d="M4 1v14l9-7z" fill="#2c4a8f" /></svg>
            </button>
            <button type="button" aria-label="Last sheet">
                <svg viewBox="0 0 16 16" className="w-4 h-4"><path d="M14 1v14" stroke="#3b5a9b" strokeWidth="3" /><path d="M2 1v14l9-7z" fill="#3b5a9b" /></svg>
            </button>
        </div>
        <SheetTab active className="w-[136px] z-30">Sheet1</SheetTab>
        <SheetTab className="w-[132px] z-20">Sheet2</SheetTab>
        <SheetTab className="w-[132px] z-10">Sheet3</SheetTab>
        <SheetTab className="w-[84px] pl-2">
            <svg viewBox="0 0 34 28" className="w-[34px] h-7" aria-label="Insert sheet">
                <path d="M12 8h12l7 6v10H17" fill="#eef4fd" stroke="#7e96c4" strokeWidth="2" />
                <path d="M8 1l3 4 5 1-3 4 1 5-6-2-5 2 1-5-3-4 5-1z" fill="#eeb349" />
            </svg>
        </SheetTab>
        <div className="ml-auto flex w-[833px]">
            <div className="w-2 bg-[#eef5ff] border border-[#7b95bd]" />
            <div className="flex flex-1 items-stretch bg-[#7898c8]">
                <button type="button" aria-label="Scroll left" className="w-[38px] flex items-center justify-center">
                    <svg viewBox="0 0 8 16" className="w-2 h-4"><path d="M8 0v16L0 8z" fill="#41598a" /></svg>
                </button>
                <div className="w-[614px] flex items-center justify-center border-b-2 border-[#6d85ae] bg-linear-to-b from-[#eceff6] to-[#b3c8ea]">
                    <svg viewBox="0 0 14 14" className="w-[14px] h-[14px]"><path d="M2 0v14M7 0v14M12 0v14" stroke="#8592ab" strokeWidth="2" /></svg>
                </div>
                <button type="button" aria-label="Scroll right" className="ml-auto mr-2 w-5 flex items-center justify-center">
                    <svg viewBox="0 0 8 16" className="w-2 h-4"><path d="M0 0v16l8-8z" fill="#41598a" /></svg>
                </button>
            </div>
            <div className="w-2 bg-[#eef5ff] border border-[#7b95bd]" />
            <div className="w-[33px] bg-[#7396cb]" />
        </div>
    </div>
);

const StatusBar = () => (
    <footer className="flex h-11 border-t-3 border-[#8ba3c8] bg-linear-to-b from-[#d3e3fb] via-[#bdd2f2] via-40% to-[#d6e4fd] text-[#41548c]">
        <span className="w-[90px] pl-[13px] leading-[38px] border-r border-[#a5bbdd]">Ready</span>
        <div className="ml-auto flex items-center gap-[10px] pl-3 pr-1 border-x-2 border-[#7390c0] bg-[#a8bedd]">
            <button type="button" aria-label="Normal" className="w-[34px] h-[34px] flex items-center justify-center bg-[#fbc65c] border border-[#d79b3c]">
                <svg viewBox="0 0 26 24" className="w-[26px] h-6">
                    <path d="M1 1h24v22H1zM1 8h24M1 15h24M9 1v22M17 1v22" fill="#f7f4ee" stroke="#8d7f6b" strokeWidth="2" />
                </svg>
            </button>
            <button type="button" aria-label="Page Layout View">
                <svg viewBox="0 0 26 26" className="w-[26px] h-[26px]">
                    <path d="M1 1h24v24H1z" fill="#a9aeb8" stroke="#7d8593" strokeWidth="2" />
                    <path d="M7 6h12v14H7z" fill="#f4f6fa" />
                    <path d="M10 10h6M10 14h6" stroke="#8b93a2" strokeWidth="2" />
                </svg>
            </button>
            <button type="button" aria-label="Page Break Preview">
                <svg viewBox="0 0 26 26" className="w-[26px] h-[26px]">
                    <path d="M1 1h24v24H1z" fill="#a9aeb8" stroke="#7d8593" strokeWidth="2" />
                    <path d="M3 3h6v14H3zM12 3h6v12h-6z" fill="#f4f6fa" />
                </svg>
            </button>
        </div>
        <div className="flex items-center w-[362px] bg-linear-to-b from-[#b5d2fa] via-[#88b0ea] via-60% to-[#7fa5dd] pl-[14px] pr-2">
            <button type="button" className="w-[60px] leading-[38px] self-start text-left">100%</button>
            <button type="button" aria-label="Zoom out" className="ml-[14px]">
                <svg viewBox="0 0 32 32" className="w-8 h-8">
                    <circle cx="16" cy="16" r="14" fill="#dbe4ef" stroke="#7388ab" strokeWidth="2" />
                    <path d="M8 16h16" stroke="#56647d" strokeWidth="4" />
                </svg>
            </button>
            <input
                type="range"
                aria-label="Zoom"
                defaultValue={50}
                className="flex-1 min-w-0 h-8 appearance-none bg-transparent bg-linear-to-r from-[#54759f] to-[#54759f] bg-[length:100%_2px] bg-center bg-no-repeat [&::-webkit-slider-thumb]:appearance-none [&::-webkit-slider-thumb]:w-4 [&::-webkit-slider-thumb]:h-7 [&::-webkit-slider-thumb]:rounded-b-full [&::-webkit-slider-thumb]:border-2 [&::-webkit-slider-thumb]:border-[#6b83ab] [&::-webkit-slider-thumb]:bg-[#e3ebf6]"
            />
            <button type="button" aria-label="Zoom in">
                <svg viewBox="0 0 32 32" className="w-8 h-8">
                    <circle cx="16" cy="16" r="14" fill="#dbe4ef" stroke="#7388ab" strokeWidth="2" />
                    <path d="M8 16h16M16 8v16" stroke="#56647d" strokeWidth="4" />
                </svg>
            </button>
        </div>
    </footer>
);

export default function App() {
    return (
        <div className="min-h-screen bg-white pl-[3px] pr-[5px] font-['Noto_Sans',sans-serif] text-[22px]">
            <div className="h-[5px] bg-[#4a5560]" />
            <TitleBar />
            <TabBar />
            <Ribbon />
            <FormulaBar />
            <div className="h-[9px] bg-[#d9e6fa] border-y border-[#9fb6d8]" />
            <main className="flex">
                <div className="flex-1 min-w-0"><Grid /></div>
                <VerticalScroll />
            </main>
            <SheetBar />
            <StatusBar />
        </div>
    );
}
